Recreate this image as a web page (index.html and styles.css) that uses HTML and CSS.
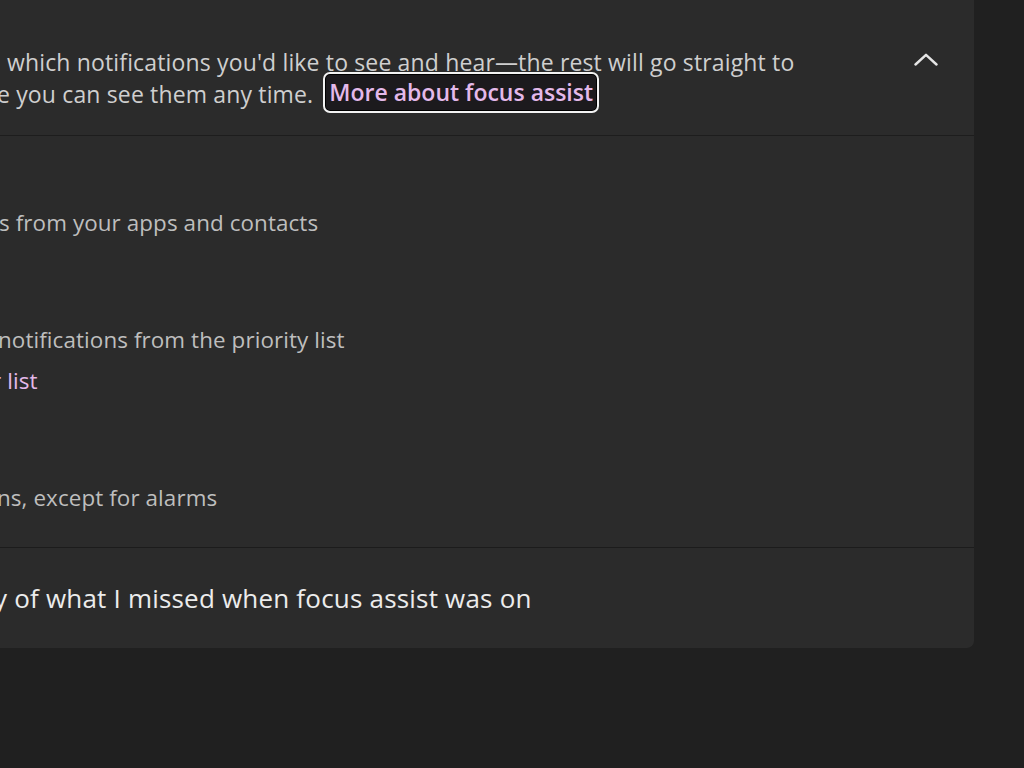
FILE: index.html
```html
<!DOCTYPE html>
<html>
<head>
<meta charset="utf-8">
<link rel="stylesheet" href="styles.css">
</head>
<body>
<div class="page">
  <div class="card">
    <div class="header">
      <div class="desc">
        <div class="line l1">which notifications you'd like to see and hear—the rest will go straight to</div>
        <div class="line l2"><span class="l2text">e you can see them any time.</span><span class="focus"><a class="link">More about focus assist</a></span></div>
      </div>
      <div class="chevron">
        <svg width="24" height="13" viewBox="0 0 24 13"><path d="M1.5 11.5 L12 1.8 L22.5 11.5" fill="none" stroke="#e6e6e6" stroke-width="2.4" stroke-linecap="round" stroke-linejoin="round"/></svg>
      </div>
    </div>
    <div class="options">
      <div class="opt o1"><div class="sub s1">s from your apps and contacts</div></div>
      <div class="opt o2">
        <div class="sub s2">notifications from the priority list</div>
        <div class="sublink s3">r list</div>
      </div>
      <div class="opt o3"><div class="sub s4">ns, except for alarms</div></div>
    </div>
  </div>
  <div class="card bottom">
    <div class="row"><span class="rowtext">y of what I missed when focus assist was on</span></div>
  </div>
</div>
</body>
</html>
```
FILE: styles.css
```css
html, body {
  margin: 0;
  padding: 0;
  background: #202020;
  overflow: hidden;
  width: 1024px;
  height: 768px;
}
body {
  font-family: "Open Sans", "Noto Sans", sans-serif;
  color: #d2d2d2;
}
.page {
  width: 974px;
  display: flex;
  flex-direction: column;
  gap: 1px;
  background: #1c1c1c;
  border-bottom-right-radius: 7px;
}
.card {
  background: #2b2b2b;
  display: flex;
  flex-direction: column;
}
.header {
  height: 136px;
  display: flex;
  align-items: flex-start;
  justify-content: space-between;
  border-bottom: 1px solid #1d1d1d;
  box-sizing: border-box;
}
.desc {
  padding-top: 47px;
  font-size: 23px;
  letter-spacing: 0.15px;
  color: #cfcfcf;
  white-space: nowrap;
}
.l1 { margin-left: 7px; line-height: 30px; }
.l2 {
  margin-left: -3px;
  margin-top: -5px;
  display: flex;
  align-items: center;
  gap: 10px;
}
.l2text { padding-top: 3px; line-height: 30px; }
.focus {
  display: block;
  border: 2px solid #f2f2f2;
  border-radius: 7px;
  padding: 0 4px;
  height: 37px;
  line-height: 37px;
  background: #1c1a1d;
  box-shadow: inset 0 0 0 1px #000;
}
.link {
  color: #e4b9ea;
  font-weight: 600;
  letter-spacing: 0;
}
.sublink {
  color: #e4b9ea;
}
.chevron {
  margin-top: 49px;
  margin-right: 36px;
}
.options {
  height: 411px;
  display: flex;
  flex-direction: column;
  font-size: 22.4px;
  letter-spacing: 0.1px;
  color: #bebebe;
  white-space: nowrap;
}
.o1 { padding-top: 72px; }
.o2 { padding-top: 87px; }
.o3 { padding-top: 87px; }
.sub, .sublink { line-height: 30px; }
.s1 { margin-left: -1px; }
.s2 { margin-left: -2px; }
.s3 { margin-left: -8px; margin-top: 11px; }
.s4 { margin-left: -3px; }
.bottom {
  border-bottom-right-radius: 7px;
}
.row {
  height: 100px;
  display: flex;
  align-items: center;
  font-size: 26px;
  letter-spacing: 0.2px;
  color: #ececec;
  white-space: nowrap;
}
.rowtext { margin-left: -6px; padding-top: 0; }
```
